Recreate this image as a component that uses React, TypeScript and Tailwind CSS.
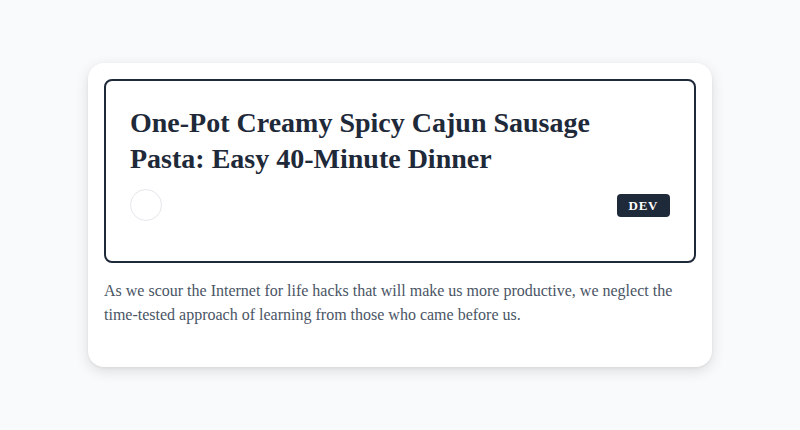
export default function App() {
  return (
    <div className="min-h-screen w-full bg-gray-50 flex items-center justify-center font-['Liberation_Serif','Times_New_Roman',serif]">
      <div className="w-[624px] bg-white rounded-2xl shadow-[0_4px_14px_rgba(0,0,0,0.12),0_1px_3px_rgba(0,0,0,0.06)] p-4 pb-10">
        <div className="border-2 border-gray-800 rounded-lg px-6 pt-6 pb-10">
          <h1 className="text-[28px] leading-9 font-bold text-gray-800">
            One-Pot Creamy Spicy Cajun Sausage Pasta: Easy 40-Minute Dinner
          </h1>
          <div className="mt-3 flex items-center justify-between">
            <div className="w-8 h-8 rounded-full border border-gray-200 bg-white" />
            <span className="bg-gray-800 text-white text-[13px] leading-[17px] font-bold tracking-wider px-3 py-[3px] rounded">
              DEV
            </span>
          </div>
        </div>
        <p className="mt-4 text-base leading-6 text-gray-600">
          As we scour the Internet for life hacks that will make us more productive, we neglect the time-tested approach of learning from those who came before us.
        </p>
      </div>
    </div>
  );
}
